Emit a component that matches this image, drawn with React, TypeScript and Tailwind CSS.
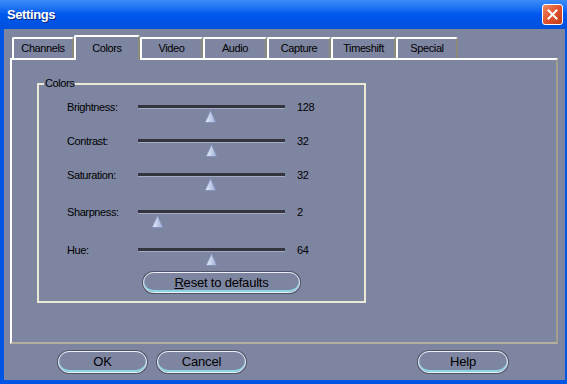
import React from 'react'

const tabs = [
  { name: 'Channels', w: 'w-[62px]' },
  { name: 'Colors', w: 'w-[66px]', active: true },
  { name: 'Video', w: 'w-[63px]' },
  { name: 'Audio', w: 'w-[64px]' },
  { name: 'Capture', w: 'w-[64px]' },
  { name: 'Timeshift', w: 'w-[65px]' },
  { name: 'Special', w: 'w-[62px]' },
]

const rows = [
  { label: 'Brightness:', value: '128', pos: 67, gap: '' },
  { label: 'Contrast:', value: '32', pos: 68, gap: 'mt-[12px]' },
  { label: 'Saturation:', value: '32', pos: 67, gap: 'mt-[12px]' },
  { label: 'Sharpness:', value: '2', pos: 14, gap: 'mt-[15px]' },
  { label: 'Hue:', value: '64', pos: 68, gap: 'mt-[16px]' },
]

const pill =
  'flex items-center justify-center rounded-full border border-[#eef0f6] shadow-[0_0_0_1px_#4e5468,inset_0_-2px_0_#8ad6e4] text-[13px] tracking-[-0.2px] text-black'

function Thumb() {
  return (
    <svg width="11" height="13" viewBox="0 0 11 13">
      <defs>
        <linearGradient id="tg" x1="0" x2="1" y1="0" y2="0">
          <stop offset="0" stopColor="#e6ecfa" />
          <stop offset="1" stopColor="#9eaed6" />
        </linearGradient>
      </defs>
      <path d="M5.5 0.5 C6.5 3 9.5 9 10.5 11.5 L10 12.5 L1 12.5 L0.5 11.5 C1.5 9 4.5 3 5.5 0.5 Z" fill="url(#tg)" stroke="#8492bc" strokeWidth="1" />
    </svg>
  )
}

function Row({ label, value, pos, gap }: { label: string; value: string; pos: number; gap: string }) {
  return (
    <div className={`flex h-[22px] items-start ${gap}`}>
      <div className="h-[15px] w-[71px] leading-[15px]">{label}</div>
      <div className="relative h-[22px] w-[147px]">
        <div className="mt-[5px] h-[3px] bg-[#33343f] shadow-[0_1px_0_#a4abc4]" />
        <div className="absolute top-[10px]" style={{ left: pos }}>
          <Thumb />
        </div>
      </div>
      <div className="ml-[12px] h-[15px] leading-[15px]">{value}</div>
    </div>
  )
}

export default function App() {
  return (
    <div className="flex h-[384px] w-[567px] flex-col bg-[#0055e5] font-['Liberation_Sans',Arial,sans-serif] text-[11px] tracking-[-0.4px] text-black">
      <div className="flex h-[29px] items-center justify-between bg-gradient-to-b from-[#3b8cf8] via-[#0058ee] to-[#0050dc] pl-[7px] pr-[4px]">
        <span className="text-[13px] font-bold tracking-[-0.4px] text-white [text-shadow:1px_1px_0_#0a2a80]">Settings</span>
        <div className="flex h-[21px] w-[21px] items-center justify-center rounded-[3px] border border-white bg-gradient-to-br from-[#f08a64] via-[#e0532c] to-[#c13c17]">
          <svg width="11" height="11" viewBox="0 0 11 11">
            <path d="M1.5 1.5 L9.5 9.5 M9.5 1.5 L1.5 9.5" stroke="white" strokeWidth="2" strokeLinecap="square" />
          </svg>
        </div>
      </div>

      <div className="mb-[4px] ml-[4px] mr-[2px] flex flex-1 flex-col bg-[#7d85a1] pl-[6px]">
        <div className="ml-[2px] mt-[6px] flex h-[23px] items-end">
          {tabs.map((t) =>
            t.active ? (
              <div
                key={t.name}
                className={`${t.w} relative z-10 -mb-[2px] flex h-[25px] items-start justify-center rounded-t-[2px] border-l-2 border-r-2 border-t-2 border-l-white border-r-[#8e8a7a] border-t-white bg-[#7d85a1] pt-[3px]`}
              >
                {t.name}
              </div>
            ) : (
              <div
                key={t.name}
                className={`${t.w} flex h-[21px] items-center justify-center rounded-t-[2px] border-l-2 border-r-2 border-t-2 border-l-white border-r-[#8e8a7a] border-t-white`}
              >
                {t.name}
              </div>
            )
          )}
        </div>

        <div className="h-[286px] w-[548px] border-2 border-b-[#b4b0a0] border-l-white border-r-[#a29e8e] border-t-white">
          <div className="relative ml-[25px] mt-[23px] w-[329px] border-2 border-[#ece8d6] pb-[8px] pl-[28px] pt-[15px]">
            <span className="absolute -top-[9px] left-[5px] h-[14px] bg-[#7d85a1] px-[1px] leading-[14px]">Colors</span>
            {rows.map((r) => (
              <Row key={r.label} {...r} />
            ))}
            <button className={`${pill} ml-[76px] mt-[7px] h-[21px] w-[157px]`}>
              <span>
                <span className="underline">R</span>eset to defaults
              </span>
            </button>
          </div>
        </div>

        <div className="ml-[48px] mr-[57px] mt-[7px] flex h-[22px] items-center">
          <button className={`${pill} h-[22px] w-[89px]`}>OK</button>
          <button className={`${pill} ml-[10px] h-[22px] w-[89px]`}>Cancel</button>
          <div className="flex-1" />
          <button className={`${pill} h-[22px] w-[90px]`}>Help</button>
        </div>
      </div>
    </div>
  )
}
